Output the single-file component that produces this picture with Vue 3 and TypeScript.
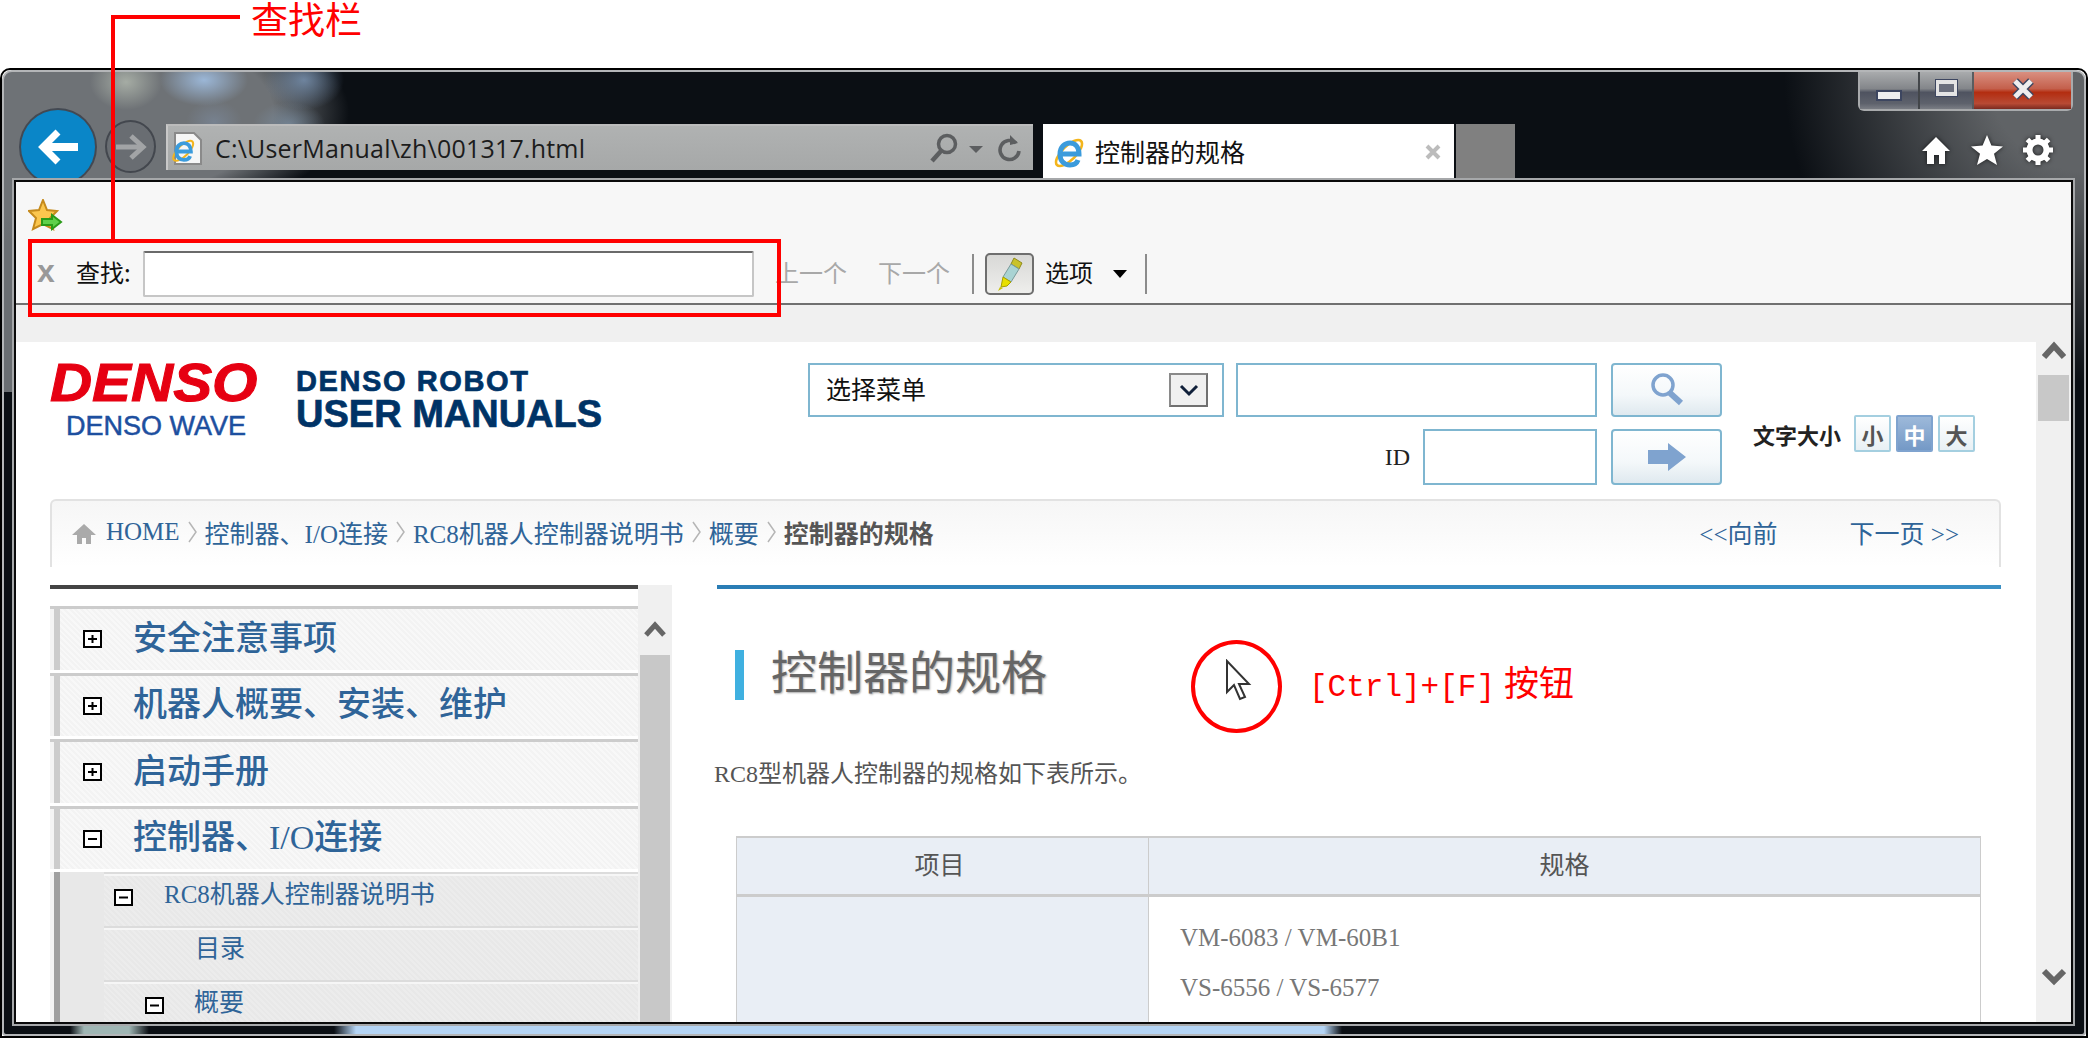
<template>
  <div class="screen">
    <svg width="0" height="0" class="defs">
      <symbol id="ie-logo" viewBox="0 0 34 34">
        <ellipse cx="16" cy="18" rx="17" ry="7" transform="rotate(-45 16 18)" fill="none" stroke="#f3b51c" stroke-width="2.6" />
        <path d="M7 19h19c0-7-4-11-9-11S7 12 7 19s4 11 10 11c4 0 7-2 8-5" fill="none" stroke="#3b9bdc" stroke-width="5" />
      </symbol>
    </svg>

    <div class="window">
      <div class="glass">
        <header class="chrome">
          <div class="caption">
            <div class="caption-group">
              <div class="cap-btn cap-min"><span class="min-bar"></span></div>
              <div class="cap-btn cap-max"><span class="max-box"></span></div>
              <div class="cap-btn cap-close">
                <svg width="26" height="22" viewBox="0 0 26 22"><path d="M5 3l16 16M21 3L5 19" stroke="#3d4660" stroke-width="8" /><path d="M5 3l16 16M21 3L5 19" stroke="#eee" stroke-width="5" /></svg>
              </div>
            </div>
          </div>
          <div class="navrow">
            <div class="back">
              <svg width="48" height="40" viewBox="0 0 48 40"><path d="M24 5L9 20l15 15" fill="none" stroke="#fff" stroke-width="7" /><path d="M11 20h33" stroke="#fff" stroke-width="8" /></svg>
            </div>
            <div class="forward">
              <svg width="32" height="28" viewBox="0 0 32 28"><path d="M16 3l12 11-12 11" fill="none" stroke="#a2a4a6" stroke-width="5" /><path d="M1 14h25" stroke="#a2a4a6" stroke-width="5" /></svg>
            </div>
            <div class="address">
              <div class="page-icon">
                <svg width="28" height="33" viewBox="0 0 28 33"><path d="M1 1h19l7 7v24H1z" fill="#f6f6f6" stroke="#8a8a8a" stroke-width="2" /></svg>
                <svg class="page-ie" width="26" height="26"><use href="#ie-logo" /></svg>
              </div>
              <span class="url">C:\UserManual\zh\001317.html</span>
              <svg class="addr-search" width="30" height="32" viewBox="0 0 30 32"><circle cx="18" cy="12" r="8.5" fill="none" stroke="#5c5e60" stroke-width="3.5" /><path d="M12 19L3 29" stroke="#5c5e60" stroke-width="4.5" /></svg>
              <span class="addr-drop"></span>
              <svg class="addr-refresh" width="24" height="32" viewBox="0 0 24 32"><path d="M19 11a9.5 9.5 0 1 0 3 8" fill="none" stroke="#5c5e60" stroke-width="3.6" /><path d="M13 3l8 8-8 2z" fill="#5c5e60" /></svg>
            </div>
            <div class="tab">
              <svg width="34" height="34"><use href="#ie-logo" /></svg>
              <span class="tab-title">控制器的规格</span>
              <svg class="tab-x" width="16" height="16" viewBox="0 0 16 16"><path d="M2 2l12 12M14 2L2 14" stroke="#bcbcbc" stroke-width="4" /></svg>
            </div>
            <div class="newtab"></div>
            <div class="tools">
              <svg width="32" height="32" viewBox="0 0 32 32"><path d="M16 3L2 17h5v13h7v-9h5v9h6V17h5z" fill="#fff" /></svg>
              <svg width="34" height="32" viewBox="0 0 34 32"><path d="M17 1l4.4 10.6L33 12.4l-9 7.4 3 11.2-10-6-10 6 3-11.2-9-7.4 11.6-.8z" fill="#fff" /></svg>
              <svg width="32" height="32" viewBox="0 0 32 32"><circle cx="16" cy="16" r="8.5" fill="none" stroke="#fff" stroke-width="6" /><path d="M16 1v6M16 25v6M1 16h6M25 16h6M5.4 5.4l4.2 4.2M22.4 22.4l4.2 4.2M26.6 5.4l-4.2 4.2M9.6 22.4l-4.2 4.2" stroke="#fff" stroke-width="5" /></svg>
            </div>
          </div>
        </header>

        <main class="viewport">
          <div class="cmdbar">
            <svg width="36" height="32" viewBox="0 0 36 32">
              <path d="M15 1l4 10 10 1-7 7 3 11-10-5-10 5 3-11-7-7 10-1z" fill="#fbc64e" stroke="#c58a1c" stroke-width="2" />
              <path d="M14 20h10v-4l9 7-9 7v-4H14z" fill="#5fd04a" stroke="#2a9a18" stroke-width="2" />
            </svg>
          </div>
          <div class="findbar">
            <span class="find-x">x</span>
            <span class="find-label">查找:</span>
            <input class="find-input" type="text" />
            <span class="find-nav">上一个</span>
            <span class="find-nav find-next">下一个</span>
            <span class="find-sep"></span>
            <div class="pen-btn">
              <svg width="30" height="36" viewBox="0 0 30 36">
                <path d="M19 2l8 5-3 6-8-5z" fill="#c9c22a" stroke="#8f8a1c" />
                <path d="M16 8l8 5-8 13-8-5z" fill="#a9d3d3" stroke="#7a9a9a" />
                <path d="M8 21l8 5-4 4-6 1z" fill="#e8e000" stroke="#a8a000" />
                <path d="M5 31l3 1-5 3z" fill="#c8c000" />
              </svg>
            </div>
            <span class="find-options">选项</span>
            <span class="find-drop"></span>
            <span class="find-sep find-sep-end"></span>
          </div>
          <div class="strip"></div>

          <div class="page">
            <div class="doc">
              <div class="site-head">
                <div class="logo">
                  <span class="logo-denso">DENSO</span>
                  <span class="logo-wave">DENSO WAVE</span>
                </div>
                <div class="product">
                  <span class="product-top">DENSO ROBOT</span>
                  <span class="product-main">USER MANUALS</span>
                </div>
                <div class="search">
                  <div class="search-row">
                    <div class="select">
                      <span class="select-text">选择菜单</span>
                      <span class="select-btn">
                        <svg width="22" height="14" viewBox="0 0 22 14"><path d="M3 3l8 8 8-8" fill="none" stroke="#10203a" stroke-width="3" /></svg>
                      </span>
                    </div>
                    <div class="field field-word"></div>
                    <div class="go-btn">
                      <svg width="34" height="36" viewBox="0 0 34 36"><circle cx="13" cy="13" r="10" fill="none" stroke="#7fa3cf" stroke-width="3.5" /><path d="M20 21l11 10" stroke="#7fa3cf" stroke-width="6" /></svg>
                    </div>
                  </div>
                  <div class="search-row search-id">
                    <span class="id-label">ID</span>
                    <div class="field field-id"></div>
                    <div class="go-btn go-arrow">
                      <svg width="38" height="28" viewBox="0 0 38 28"><path d="M0 7h20V0l18 14-18 14v-7H0z" fill="#7fa3cf" /></svg>
                    </div>
                  </div>
                </div>
                <div class="textsize">
                  <span class="textsize-label">文字大小</span>
                  <span v-for="s in sizes" :key="s" class="size-btn" :class="{ active: s === '中' }">{{ s }}</span>
                </div>
              </div>

              <nav class="crumbs">
                <svg class="crumb-home" width="24" height="20" viewBox="0 0 24 20"><path d="M12 0L0 11h5v9h5v-6h4v6h5v-9h5z" fill="#aaa" /></svg>
                <template v-for="(c, i) in crumbs" :key="c">
                  <span class="crumb" :class="{ current: i === crumbs.length - 1 }">{{ c }}</span>
                  <svg v-if="i < crumbs.length - 1" width="9" height="24" viewBox="0 0 9 24"><path d="M1 2l7 10-7 10" fill="none" stroke="#b5b5b5" stroke-width="1.5" /></svg>
                </template>
                <span class="pager">
                  <span>&lt;&lt;向前</span>
                  <span>下一页 &gt;&gt;</span>
                </span>
              </nav>

              <div class="columns">
                <aside class="side">
                  <div class="tree">
                    <div v-for="item in topItems" :key="item.label" class="tree-item">
                      <svg width="19" height="18" viewBox="0 0 19 18"><rect x="1" y="1" width="17" height="16" fill="#fff" stroke="#000" stroke-width="2" /><path d="M5 9h9" stroke="#000" stroke-width="2" /><path v-if="!item.open" d="M9.5 5v8" stroke="#000" stroke-width="2" /></svg>
                      <span class="tree-text">{{ item.label }}</span>
                    </div>
                    <div class="subtree">
                      <div v-for="row in subItems" :key="row.label" class="sub-item" :class="row.cls">
                        <svg v-if="row.box" width="19" height="17" viewBox="0 0 19 17"><rect x="1" y="1" width="17" height="15" fill="#fff" stroke="#000" stroke-width="2" /><path d="M5 8.5h9" stroke="#000" stroke-width="2" /></svg>
                        <span class="sub-text">{{ row.label }}</span>
                      </div>
                    </div>
                  </div>
                  <div class="side-scroll">
                    <svg width="22" height="17" viewBox="0 0 22 17"><path d="M2 14l9-10 9 10" fill="none" stroke="#666" stroke-width="5" /></svg>
                    <div class="side-thumb"></div>
                  </div>
                </aside>

                <article class="article">
                  <div class="rule"></div>
                  <h1 class="title"><span class="title-text">控制器的规格</span></h1>
                  <p class="intro">RC8型机器人控制器的规格如下表所示。</p>
                  <table class="spec">
                    <thead>
                      <tr><th class="col-a">项目</th><th>规格</th></tr>
                    </thead>
                    <tbody>
                      <tr>
                        <td class="col-a"></td>
                        <td class="models">
                          <p v-for="m in models" :key="m">{{ m }}</p>
                        </td>
                      </tr>
                    </tbody>
                  </table>
                </article>
              </div>
            </div>

            <div class="page-scroll">
              <svg width="24" height="19" viewBox="0 0 24 19"><path d="M2 16L12 5l10 11" fill="none" stroke="#666" stroke-width="6" /></svg>
              <div class="page-thumb"></div>
              <svg class="page-down" width="24" height="18" viewBox="0 0 24 18"><path d="M2 3l10 10L22 3" fill="none" stroke="#666" stroke-width="6" /></svg>
            </div>
          </div>
        </main>

        <div class="glow"></div>
      </div>
    </div>

    <!-- red annotations drawn over the screenshot -->
    <div class="note-leader"></div>
    <div class="note-box"></div>
    <span class="note-label">查找栏</span>
    <div class="note-ring"></div>
    <svg class="note-cursor" width="28" height="42" viewBox="0 0 28 42">
      <path d="M2 2v31l7-7 6 14 5-2-6-13h10z" fill="#fff" stroke="#333" stroke-width="2" />
    </svg>
    <span class="note-keys">[Ctrl]+[F]<span class="note-cjk">按钮</span></span>
  </div>
</template>

<script setup lang="ts">
interface TopItem {
  label: string
  open: boolean
}

interface SubItem {
  label: string
  cls: string
  box: boolean
}

const sizes = ['小', '中', '大']
const crumbs = ['HOME', '控制器、I/O连接', 'RC8机器人控制器说明书', '概要', '控制器的规格']

const topItems: TopItem[] = [
  { label: '安全注意事项', open: false },
  { label: '机器人概要、安装、维护', open: false },
  { label: '启动手册', open: false },
  { label: '控制器、I/O连接', open: true }
]

const subItems: SubItem[] = [
  { label: 'RC8机器人控制器说明书', cls: 'lvl-1', box: true },
  { label: '目录', cls: 'lvl-leaf', box: false },
  { label: '概要', cls: 'lvl-2', box: true }
]

const models = ['VM-6083 / VM-60B1', 'VS-6556 / VS-6577']
</script>

<style>
html,
body {
  margin: 0;
  background: #fff;
  overflow: hidden;
}
</style>

<style scoped>
.screen {
  position: relative;
  width: 2088px;
  height: 1038px;
  padding-top: 68px;
  box-sizing: border-box;
  overflow: hidden;
  background: #fff;
  font-family: "Noto Sans CJK SC", sans-serif;
}

.defs {
  position: absolute;
}

.window {
  height: 970px;
  box-sizing: border-box;
  border: 2px solid #000;
  border-radius: 10px 10px 0 0;
}

.glass {
  height: 100%;
  box-sizing: border-box;
  border: 2px solid #b4b6b8;
  border-radius: 10px 10px 4px 4px;
  background:
    radial-gradient(ellipse 36px 28px at 122px 10px, rgba(175, 182, 172, 0.85), transparent),
    radial-gradient(ellipse 44px 26px at 200px 8px, rgba(160, 190, 225, 0.9), transparent),
    radial-gradient(ellipse 40px 30px at 300px 8px, rgba(120, 145, 175, 0.85), transparent),
    radial-gradient(ellipse 36px 22px at 285px 52px, rgba(125, 145, 165, 0.7), transparent),
    radial-gradient(ellipse 28px 22px at 210px 50px, rgba(125, 140, 160, 0.6), transparent),
    radial-gradient(ellipse 345px 130px at 0 40px, #6e7276 78%, transparent 100%),
    linear-gradient(90deg, #6a6e72 0, #6a6e72 14px, transparent 14px) 0 0 / 100% 320px no-repeat,
    radial-gradient(ellipse 300px 310px at 100% 0, #606366 32%, transparent 100%),
    #0b0f14;
}

.chrome {
  height: 106px;
  overflow: hidden;
}

.caption {
  display: flex;
  justify-content: flex-end;
  height: 39px;
  padding-right: 11px;
}

.caption-group {
  display: flex;
  width: 215px;
  box-sizing: border-box;
  border: 2px solid #a8aaac;
  border-top: 0;
  border-radius: 0 0 6px 6px;
  gap: 2px;
}

.cap-btn {
  display: flex;
  align-items: center;
  justify-content: center;
  background: linear-gradient(#a9abad 0, #83868a 45%, #4f5360 55%, #5e626c 85%, #7a7d84 100%);
}

.cap-min {
  width: 58px;
  padding-top: 10px;
  box-sizing: border-box;
}

.cap-max {
  width: 52px;
  padding-bottom: 6px;
  box-sizing: border-box;
}

.cap-close {
  flex: 1;
  padding-bottom: 4px;
  box-sizing: border-box;
  background: linear-gradient(#d98f80 0, #c4604c 45%, #b32d10 55%, #b84a34 85%, #7a2a20 100%);
}

.min-bar {
  width: 22px;
  height: 7px;
  background: #eee;
  outline: 2px solid #3d4660;
}

.max-box {
  width: 21px;
  height: 16px;
  box-sizing: border-box;
  border: 4px solid #e4e4e4;
  border-left-width: 3px;
  border-right-width: 3px;
  background: #6a6e7c;
  outline: 1px solid #3d4660;
}

.navrow {
  display: flex;
  align-items: flex-start;
  height: 68px;
  padding-left: 17px;
  margin-top: -1px;
}

.back {
  display: flex;
  align-items: center;
  justify-content: center;
  flex: none;
  width: 74px;
  height: 74px;
  box-sizing: border-box;
  border-radius: 50%;
  background: #0a86c8;
  box-shadow: 0 0 0 2px rgba(60, 66, 76, 0.85);
}

.forward {
  display: flex;
  align-items: center;
  justify-content: center;
  flex: none;
  width: 51px;
  height: 53px;
  margin: 10px 10px 0;
  box-sizing: border-box;
  border: 2px solid #43474e;
  border-radius: 50%;
  background: rgba(100, 104, 110, 0.5);
}

.address {
  display: flex;
  align-items: center;
  flex: none;
  width: 867px;
  height: 46px;
  margin-top: 14px;
  padding-left: 4px;
  box-sizing: border-box;
  background: linear-gradient(#b0b2b2, #a6a8a8);
  border-left: 2px solid #c8c8c8;
  border-top: 2px solid #bcbcbc;
}

.page-icon {
  position: relative;
  width: 30px;
  height: 33px;
  margin-left: 2px;
}

.page-ie {
  position: absolute;
  left: -3px;
  top: 5px;
}

.url {
  margin-left: 11px;
  font-family: "Open Sans", sans-serif;
  font-size: 25px;
  letter-spacing: 0.2px;
  color: #1c1c1c;
  white-space: nowrap;
}

.addr-search {
  margin-left: auto;
}

.addr-drop {
  width: 0;
  height: 0;
  margin: 2px 0 0 10px;
  border: 7px solid transparent;
  border-top: 7px solid #5c5e60;
  border-bottom: 0;
}

.addr-refresh {
  margin: 0 12px 0 14px;
}

.tab {
  display: flex;
  align-items: center;
  flex: none;
  width: 411px;
  height: 56px;
  margin: 14px 0 0 10px;
  padding-left: 10px;
  box-sizing: border-box;
  background: #fff;
}

.tab-title {
  margin: -2px 0 0 8px;
  font-size: 25px;
  color: #111;
  white-space: nowrap;
}

.tab-x {
  margin-left: auto;
  margin-right: 13px;
}

.newtab {
  flex: none;
  width: 59px;
  height: 56px;
  margin: 14px 0 0 2px;
  background: #808080;
}

.tools {
  display: flex;
  align-items: center;
  gap: 18px;
  height: 32px;
  margin: 24px 30px 0 auto;
}

.tools svg {
  filter: drop-shadow(0 0 2px rgba(0, 0, 0, 0.7));
}

.viewport {
  display: flex;
  flex-direction: column;
  height: 840px;
  margin: 4px 13px 0 12px;
  overflow: hidden;
  background: #f7f7f7;
  box-shadow: 0 0 0 2px #0a0a0a, 0 0 0 4px #a6a8aa;
  position: relative;
}

.cmdbar {
  height: 61px;
  flex: none;
  padding: 17px 0 0 12px;
  box-sizing: border-box;
}

.findbar {
  display: flex;
  align-items: center;
  flex: none;
  height: 62px;
  padding: 2px 0 0 21px;
  box-sizing: border-box;
  border-bottom: 2px solid #707070;
}

.find-x {
  width: 19px;
  font-family: "Liberation Sans", sans-serif;
  font-size: 32px;
  font-weight: 700;
  line-height: 30px;
  color: #999;
  margin-top: -6px;
}

.find-label {
  width: 66px;
  margin: -6px 0 0 20px;
  font-size: 24px;
  color: #111;
}

.find-input {
  width: 611px;
  height: 46px;
  margin-left: 1px;
  padding: 0;
  box-sizing: border-box;
  border: 2px solid #c6c6c6;
  border-top-color: #6a6a6a;
  border-radius: 2px;
  background: #fff;
  outline: none;
}

.find-nav {
  margin: -6px 0 0 21px;
  font-size: 24px;
  color: #a8a8a8;
}

.find-next {
  margin-left: 31px;
}

.find-sep {
  width: 2px;
  height: 40px;
  margin-left: 22px;
  background: #8c8c8c;
}

.pen-btn {
  display: flex;
  align-items: center;
  justify-content: center;
  width: 49px;
  height: 42px;
  margin-left: 11px;
  box-sizing: border-box;
  border: 2px solid #6e6e6e;
  border-radius: 5px;
  background: linear-gradient(#d8d8d6, #eeeeec);
}

.find-options {
  margin: -6px 0 0 11px;
  font-size: 24px;
  color: #111;
}

.find-drop {
  width: 0;
  height: 0;
  margin-left: 20px;
  border: 7px solid transparent;
  border-top: 8px solid #000;
  border-bottom: 0;
}

.find-sep-end {
  margin-left: 18px;
}

.strip {
  flex: none;
  height: 37px;
  background: #f0f0f0;
}

.page {
  display: flex;
  flex: 1;
  min-height: 0;
  background: #fff;
}

.doc {
  width: 2020px;
  flex: none;
  padding: 0 35px 0 34px;
  box-sizing: border-box;
  font-family: "Liberation Serif", "Noto Sans CJK SC", serif;
}

.site-head {
  display: flex;
  height: 157px;
}

.logo {
  display: flex;
  flex-direction: column;
  flex: none;
  width: 246px;
  font-family: "Liberation Sans", sans-serif;
}

.logo-denso {
  margin-top: 13px;
  font-size: 54px;
  font-weight: 700;
  font-style: italic;
  line-height: 54px;
  color: #e60012;
  -webkit-text-stroke: 1px #e60012;
  transform: scaleX(1.08);
  transform-origin: 0 0;
}

.logo-wave {
  margin: 2px 0 0 16px;
  font-size: 27px;
  line-height: 30px;
  color: #1d4f9f;
  -webkit-text-stroke: 0.5px #1d4f9f;
  white-space: nowrap;
}

.product {
  display: flex;
  flex-direction: column;
  flex: none;
  width: 512px;
  padding-top: 24px;
  box-sizing: border-box;
  font-family: "Liberation Sans", sans-serif;
  font-weight: 700;
  color: #003366;
  -webkit-text-stroke: 0.7px #003366;
  white-space: nowrap;
}

.product-top {
  font-size: 29px;
  line-height: 30px;
  letter-spacing: 1.6px;
}

.product-main {
  font-size: 38px;
  line-height: 36px;
}

.search {
  display: flex;
  flex-direction: column;
  flex: none;
  width: 914px;
  gap: 12px;
  padding-top: 21px;
}

.search-row {
  display: flex;
  align-items: stretch;
  height: 54px;
}

.search-id {
  justify-content: flex-end;
  height: 56px;
}

.select {
  display: flex;
  align-items: center;
  justify-content: space-between;
  width: 416px;
  padding: 0 14px 0 16px;
  box-sizing: border-box;
  border: 2px solid #7fb6d0;
  font-family: "Noto Sans CJK SC", sans-serif;
  font-size: 25px;
  color: #111;
}

.select-text {
  margin-top: -5px;
}

.select-btn {
  display: flex;
  align-items: center;
  justify-content: center;
  width: 39px;
  height: 34px;
  box-sizing: border-box;
  border: 2px solid #8a8a8a;
  border-right-color: #707070;
  border-bottom-color: #707070;
  background: #f0f0f0;
}

.field {
  box-sizing: border-box;
  border: 2px solid #7fb6d0;
  background: #fff;
}

.field-word {
  width: 361px;
  margin-left: 12px;
}

.field-id {
  width: 174px;
}

.id-label {
  align-self: center;
  margin-right: 13px;
  font-size: 24px;
  color: #222;
}

.go-btn {
  display: flex;
  align-items: center;
  justify-content: center;
  width: 111px;
  margin-left: 14px;
  box-sizing: border-box;
  border: 2px solid #7fb6d0;
  border-radius: 4px;
  background: linear-gradient(#fff 0, #f4f8fa 60%, #dfe9ef 100%);
}

.textsize {
  display: flex;
  align-items: center;
  flex: none;
  height: 37px;
  margin: 73px 0 0 31px;
  gap: 5px;
}

.textsize-label {
  width: 96px;
  font-family: "Noto Sans CJK SC", sans-serif;
  font-size: 22px;
  font-weight: 700;
  color: #222;
  white-space: nowrap;
}

.size-btn {
  display: flex;
  align-items: center;
  justify-content: center;
  width: 37px;
  height: 37px;
  box-sizing: border-box;
  border: 2px solid #a4cfe0;
  border-radius: 2px;
  background: linear-gradient(#fff, #e8f0f4);
  font-family: "Noto Sans CJK SC", sans-serif;
  font-size: 22px;
  font-weight: 700;
  color: #555;
}

.size-btn.active {
  border-color: #7fa3cf;
  background: linear-gradient(#9db9da, #7499c6);
  color: #fff;
}

.crumbs {
  display: flex;
  align-items: center;
  gap: 8px;
  height: 68px;
  padding-left: 20px;
  padding-right: 40px;
  padding-bottom: 4px;
  box-sizing: border-box;
  border: 2px solid #e2e2e2;
  border-bottom: 0;
  border-radius: 6px 6px 0 0;
  background: linear-gradient(#f6f6f6, #fff);
  font-size: 25px;
  color: #2f6498;
  white-space: nowrap;
}

.crumb-home {
  margin: 4px 2px 0 0;
}

.current {
  font-weight: 700;
  color: #555;
}

.pager {
  display: flex;
  gap: 72px;
  margin-left: auto;
}

.columns {
  display: flex;
  gap: 45px;
  margin-top: 18px;
}

.side {
  display: flex;
  flex: none;
  width: 622px;
  height: 437px;
  overflow: hidden;
}

.tree {
  flex: none;
  width: 588px;
  padding-top: 17px;
  box-sizing: border-box;
  border-top: 4px solid #444;
}

.tree-item {
  display: flex;
  align-items: center;
  gap: 31px;
  height: 66.5px;
  padding-left: 33px;
  box-sizing: border-box;
  border-top: 3px solid #ccc;
  border-bottom: 3px solid #fff;
  background:
    linear-gradient(90deg, #f4f4f4 0 4px, #ccc 4px 10px, transparent 10px),
    repeating-linear-gradient(45deg, #f3f3f3 0 2px, #f8f8f8 2px 4px);
  font-family: "Liberation Serif", "Noto Sans CJK SC", serif;
  font-size: 34px;
  font-weight: 500;
  color: #2f6498;
  white-space: nowrap;
}

.tree-item:last-of-type {
  border-bottom: 0;
}

.tree-text {
  padding-bottom: 8px;
}

.subtree {
  padding-left: 54px;
  background:
    linear-gradient(90deg, #f4f4f4 0 4px, #a0a0a0 4px 10px, #e8e8e8 10px);
  font-size: 25px;
  color: #2f6498;
}

.sub-item {
  display: flex;
  align-items: center;
  height: 54px;
  padding-bottom: 5px;
  box-sizing: border-box;
  border-top: 2px solid #dcdcdc;
  box-shadow: inset 0 2px 0 #f6f6f6;
  background: repeating-linear-gradient(45deg, #e8e8e8 0 2px, #ececec 2px 4px);
  white-space: nowrap;
}

.sub-text {
  line-height: 36px;
  padding-bottom: 6px;
}

.lvl-1 {
  gap: 31px;
  padding-left: 10px;
}

.lvl-leaf {
  padding-left: 91px;
}

.lvl-2 {
  gap: 30px;
  padding-left: 41px;
}

.side-scroll {
  display: flex;
  flex-direction: column;
  align-items: center;
  flex: none;
  width: 34px;
  padding-top: 36px;
  box-sizing: border-box;
  background: #f0f0f0;
}

.side-thumb {
  width: 30px;
  flex: 1;
  margin-top: 17px;
  background: #c8c8c8;
}

.article {
  flex: none;
  width: 1287px;
  height: 437px;
  margin-left: -3px;
  overflow: hidden;
}

.rule {
  height: 4px;
  margin-left: 3px;
  background: linear-gradient(90deg, #2a7db5, #3a90c5);
}

.title {
  margin: 61px 0 0 21px;
  height: 50px;
  padding-left: 27px;
  border-left: 9px solid #3fb0e0;
  font-family: "Noto Sans CJK SC", sans-serif;
  font-size: 46px;
  font-weight: 400;
  line-height: 38px;
  color: #666;
  text-shadow: 1px 1px 2px #aaa;
  white-space: nowrap;
}

.intro {
  margin: 59px 0 0 0;
  font-size: 24px;
  line-height: 30px;
  color: #555;
}

.spec {
  width: 1245px;
  margin: 47px 0 0 22px;
  border-collapse: collapse;
  table-layout: fixed;
  font-size: 25px;
  color: #555;
}

.spec th {
  height: 58px;
  padding: 0 0 6px;
  border: 1px solid #ccc;
  border-top-width: 2px;
  border-bottom-width: 3px;
  background: #e9eef5;
  font-weight: 400;
  box-sizing: border-box;
}

.spec th.col-a {
  padding-right: 6px;
}

.spec td {
  height: 220px;
  border: 1px solid #ccc;
  vertical-align: top;
}

.spec .col-a {
  width: 412px;
  background: #e9eef5;
}

.models {
  padding: 26px 0 0 31px;
  color: #777;
}

.models p {
  margin: 0 0 20px;
  line-height: 30px;
}

.page-scroll {
  display: flex;
  flex-direction: column;
  align-items: center;
  flex: 1;
  background: #f0f0f0;
}

.page-scroll > svg:first-child {
  margin-top: -1px;
}

.page-thumb {
  width: 31px;
  height: 46px;
  margin-top: 15px;
  background: #c8c8c8;
}

.page-down {
  margin-top: auto;
  margin-bottom: 36px;
}

.glow {
  height: 8px;
  margin-top: 4px;
  background: linear-gradient(90deg, transparent 0, transparent 66px, #9fb6b4 80px, #9fb6b4 125px, transparent 145px, transparent 330px, #b4d4f4 352px, #b4d4f4 1320px, transparent 1338px);
}

.note-leader {
  position: absolute;
  left: 111px;
  top: 15px;
  width: 129px;
  height: 225px;
  box-sizing: border-box;
  border-top: 4px solid #f00;
  border-left: 4px solid #f00;
}

.note-box {
  position: absolute;
  left: 28px;
  top: 239px;
  width: 753px;
  height: 78px;
  box-sizing: border-box;
  border: 4px solid #f00;
}

.note-label {
  position: absolute;
  left: 251px;
  top: 0;
  font-size: 37px;
  line-height: 36px;
  color: #f00;
}

.note-ring {
  position: absolute;
  left: 1191px;
  top: 640px;
  width: 91px;
  height: 93px;
  box-sizing: border-box;
  border: 4px solid #f00;
  border-radius: 50%;
}

.note-cursor {
  position: absolute;
  left: 1225px;
  top: 659px;
}

.note-keys {
  position: absolute;
  left: 1309px;
  top: 658px;
  font-family: "Liberation Mono", monospace;
  font-size: 31px;
  line-height: 46px;
  color: #f00;
  white-space: nowrap;
}

.note-cjk {
  margin-left: 9px;
  font-family: "Noto Sans CJK SC", sans-serif;
  font-size: 35px;
}
</style>
